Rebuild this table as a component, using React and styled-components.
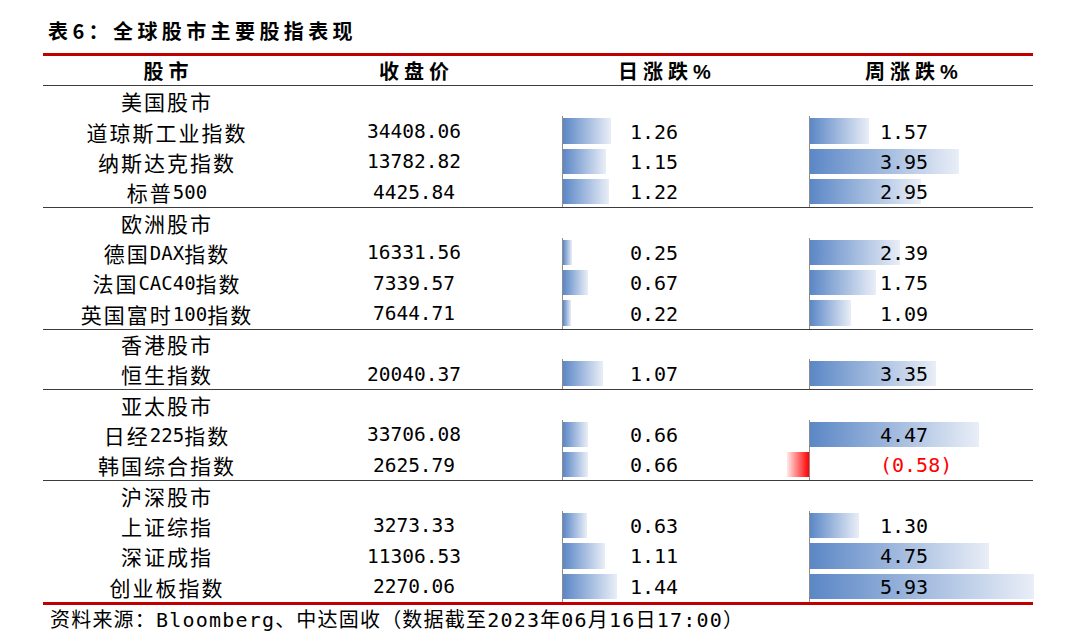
import React from "react";
import styled, { createGlobalStyle } from "styled-components";

// Index performance table, bars drawn like Excel data bars
const groups = [
  {
    name: "美国股市",
    rows: [
      { name: "道琼斯工业指数", close: "34408.06", day: 1.26, week: 1.57 },
      { name: "纳斯达克指数", close: "13782.82", day: 1.15, week: 3.95 },
      { name: "标普500", close: "4425.84", day: 1.22, week: 2.95 },
    ],
  },
  {
    name: "欧洲股市",
    rows: [
      { name: "德国DAX指数", close: "16331.56", day: 0.25, week: 2.39 },
      { name: "法国CAC40指数", close: "7339.57", day: 0.67, week: 1.75 },
      { name: "英国富时100指数", close: "7644.71", day: 0.22, week: 1.09 },
    ],
  },
  {
    name: "香港股市",
    rows: [{ name: "恒生指数", close: "20040.37", day: 1.07, week: 3.35 }],
  },
  {
    name: "亚太股市",
    rows: [
      { name: "日经225指数", close: "33706.08", day: 0.66, week: 4.47 },
      { name: "韩国综合指数", close: "2625.79", day: 0.66, week: -0.58 },
    ],
  },
  {
    name: "沪深股市",
    rows: [
      { name: "上证综指", close: "3273.33", day: 0.63, week: 1.3 },
      { name: "深证成指", close: "11306.53", day: 1.11, week: 4.75 },
      { name: "创业板指数", close: "2270.06", day: 1.44, week: 5.93 },
    ],
  },
];

const PX_PER_UNIT = 37.7;
const MONO = `"DejaVu Sans Mono", "Noto Sans CJK SC", monospace`;

const fmt = (v) => (v < 0 ? `(${Math.abs(v).toFixed(2)})` : v.toFixed(2));

// split label into ascii / cjk runs so latin parts keep their own spacing
function Label({ text }) {
  const parts = text.split(/([\x00-\x7f]+)/);
  return parts.map((p, i) =>
    i % 2 ? <Latin key={i}>{p}</Latin> : <React.Fragment key={i}>{p}</React.Fragment>
  );
}

function BarValue({ value, axis, textAt }) {
  const w = Math.abs(value) * PX_PER_UNIT;
  return (
    <BarCell $textAt={textAt}>
      <Axis $x={axis} />
      <Bar $neg={value < 0} $x={axis} style={{ width: w }} />
      <Num $neg={value < 0}>{fmt(value)}</Num>
    </BarCell>
  );
}

export default function App() {
  return (
    <Page>
      <GlobalStyle />
      <Title>表6：全球股市主要股指表现</Title>
      <Table>
        <HeadRow>
          <HeadCell>股市</HeadCell>
          <HeadCell>收盘价</HeadCell>
          <HeadCell>日涨跌%</HeadCell>
          <HeadCell>周涨跌%</HeadCell>
        </HeadRow>
        {groups.map((g, gi) => (
          <Group key={g.name} $last={gi === groups.length - 1}>
            <Row>
              <NameCell>{g.name}</NameCell>
            </Row>
            {g.rows.map((r) => (
              <Row key={r.name}>
                <NameCell>
                  <Label text={r.name} />
                </NameCell>
                <CloseCell>{r.close}</CloseCell>
                <BarValue value={r.day} axis={23} textAt={91} />
                <BarValue value={r.week} axis={19} textAt={90} />
              </Row>
            ))}
          </Group>
        ))}
      </Table>
      <Source>资料来源：Bloomberg、中达固收（数据截至2023年06月16日17:00）</Source>
    </Page>
  );
}

const GlobalStyle = createGlobalStyle`
  body {
    margin: 0;
    background: #fff;
    color: #000;
    font-family: ${MONO};
  }
`;

const Page = styled.div`
  width: 990px;
  padding: 19px 0 0 43px;
`;

const Title = styled.div`
  margin-left: 5px;
  height: 24px;
  line-height: 24px;
  font-family: "Noto Sans CJK SC", sans-serif;
  font-weight: 700;
  font-size: 20px;
  letter-spacing: 4.4px;
  color: #000;
`;

const Table = styled.div`
  margin-top: 10px;
  border-top: 3px solid #c00000;
  border-bottom: 3px solid #c00000;
`;

const cols = `246px 250px 251px 243px`;

const HeadRow = styled.div`
  display: grid;
  grid-template-columns: ${cols};
  height: 30px;
  box-sizing: border-box;
  border-bottom: 1px solid #3c3c3c;
`;

const HeadCell = styled.div`
  display: flex;
  align-items: center;
  justify-content: center;
  padding-left: 5px;
  font-family: "Liberation Sans", "Noto Sans CJK SC", sans-serif;
  font-size: 20px;
  font-weight: 700;
  letter-spacing: 5px;
`;

const Group = styled.div`
  border-bottom: ${(p) => (p.$last ? "none" : "1px solid #3c3c3c")};
  margin-bottom: ${(p) => (p.$last ? "0" : "-1px")};
  position: relative;
  z-index: 1;
`;

const Row = styled.div`
  display: grid;
  grid-template-columns: ${cols};
  height: 30.35px;
`;

const NameCell = styled.div`
  display: flex;
  align-items: center;
  justify-content: center;
  padding-left: 2px;
  font-family: "Noto Sans CJK SC", sans-serif;
  font-size: 21px;
  letter-spacing: 2px;
  white-space: nowrap;
`;

const Latin = styled.span`
  font-family: ${MONO};
  font-size: 19px;
  letter-spacing: 0;
`;

const CloseCell = styled.div`
  display: flex;
  align-items: center;
  justify-content: center;
  font-size: 19.5px;
`;

const BarCell = styled.div`
  position: relative;
  display: flex;
  align-items: center;
  padding-left: ${(p) => p.$textAt}px;
`;

const Axis = styled.div`
  position: absolute;
  top: 0;
  bottom: 0;
  left: ${(p) => p.$x}px;
  width: 1px;
  background: #8c8c8c;
`;

const Bar = styled.div`
  position: absolute;
  top: 2px;
  bottom: 3px;
  ${(p) =>
    p.$neg
      ? `right: calc(100% - ${p.$x}px);
         background: linear-gradient(90deg, #ffe8e8 0%, #ff0000 100%);`
      : `left: ${p.$x + 1}px;
         background: linear-gradient(90deg, #5b87c6 0%, #e9eef7 100%);`}
`;

const Num = styled.span`
  position: relative;
  font-size: 20px;
  color: ${(p) => (p.$neg ? "#ff0000" : "#000")};
`;

const Source = styled.div`
  margin: 3px 0 0 7px;
  line-height: 24px;
  font-size: 20px;
  letter-spacing: 1.2px;
  white-space: nowrap;
`;
